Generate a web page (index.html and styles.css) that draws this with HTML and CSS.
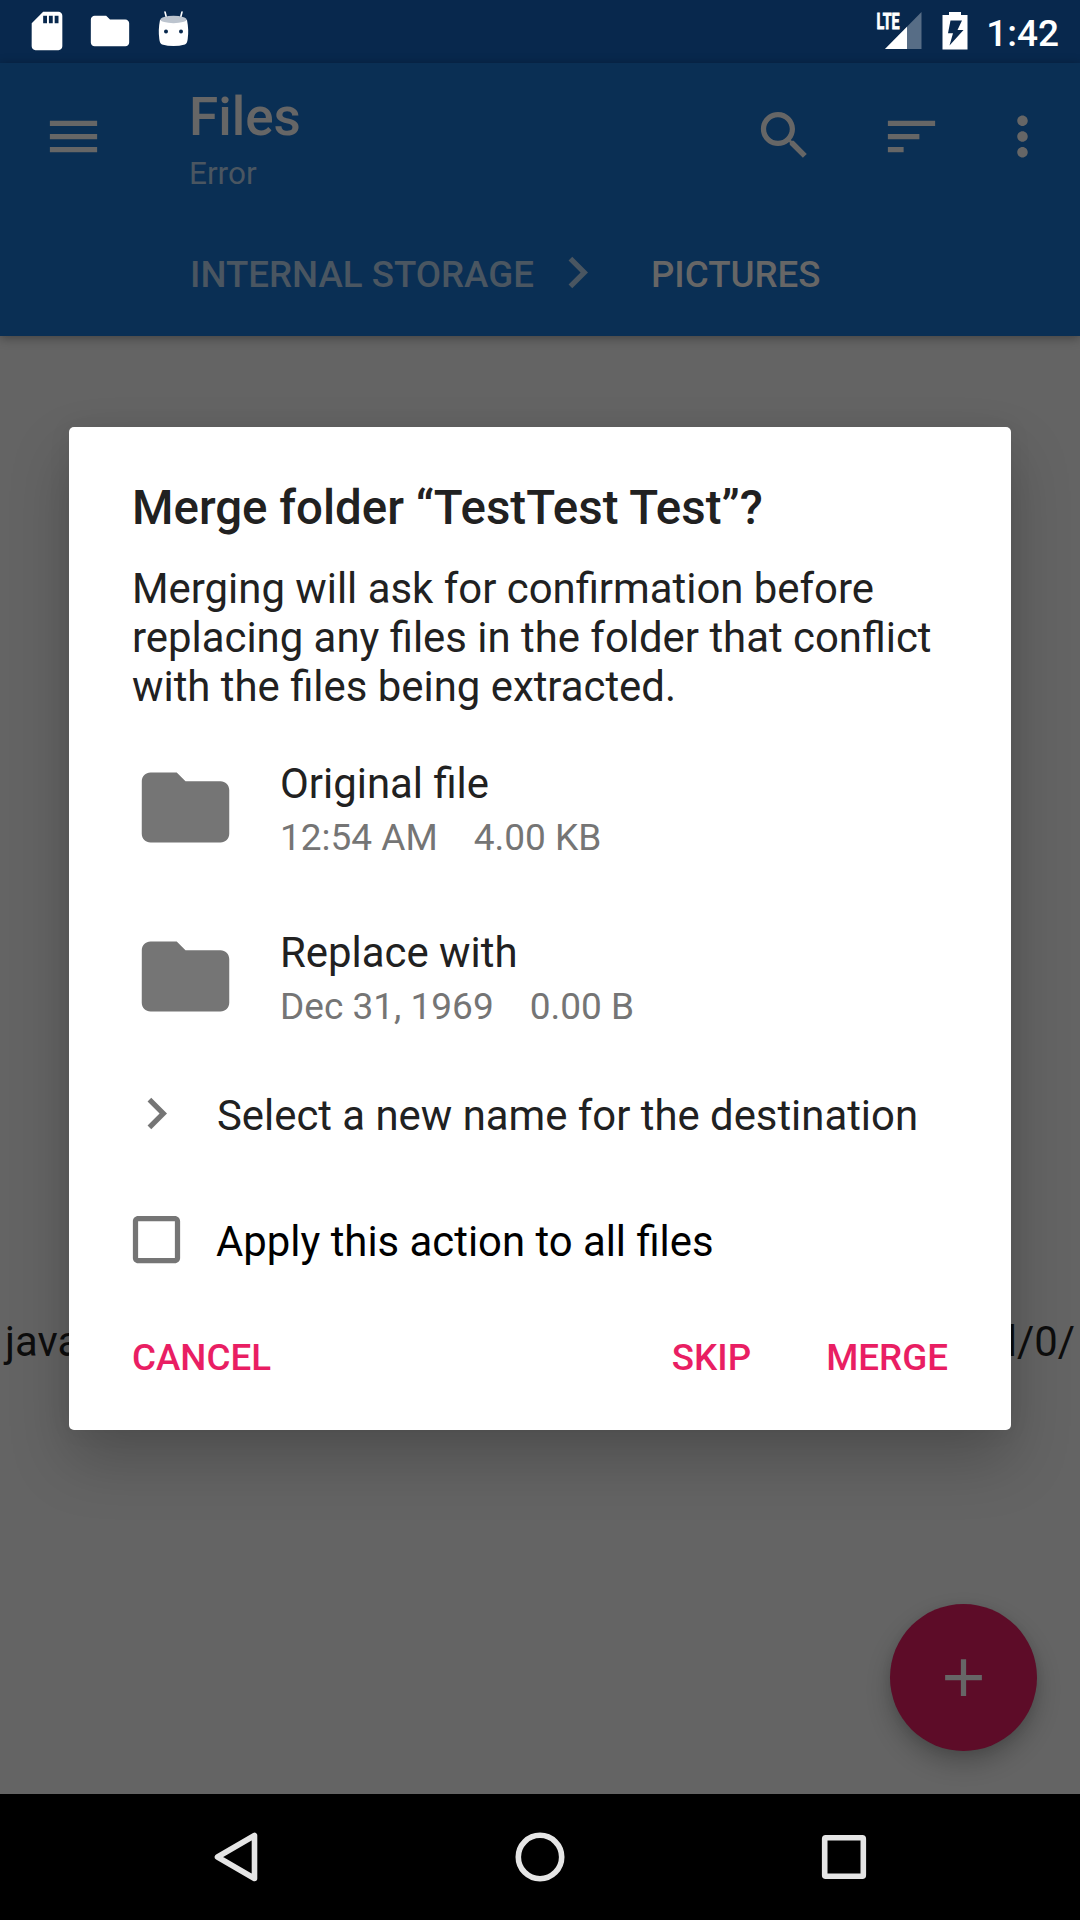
FILE: index.html
```html
<!DOCTYPE html>
<html lang="en">
<head>
<meta charset="utf-8">
<title>Files</title>
<link rel="stylesheet" href="styles.css">
</head>
<body>
<div class="screen">
  <header class="status-bar">
    <div class="notifications">
      <svg class="status-icon" viewBox="0 0 24 24"><path d="M18 2h-8L4.02 8 4 20c0 1.1.9 2 2 2h12c1.1 0 2-.9 2-2V4c0-1.1-.9-2-2-2zm-6 6h-2V4h2v4zm3 0h-2V4h2v4zm3 0h-2V4h2v4z"/></svg>
      <svg class="status-icon" viewBox="0 0 24 24"><path d="M10 4H4c-1.1 0-1.99.9-1.99 2L2 18c0 1.1.9 2 2 2h16c1.1 0 2-.9 2-2V8c0-1.1-.9-2-2-2h-8l-2-2z"/></svg>
      <svg class="status-icon" viewBox="0 0 46 46">
        <path d="M15 4l1.800 7M32 4l-1.800 7" fill="none" stroke="#fff" stroke-width="1.600" stroke-linecap="round"/>
        <path d="M10 12Q8 22 9.300 31Q9.800 35.500 12 36.500Q23.500 39.500 35 36.500Q37.200 35.500 37.700 31Q39 22 37 12Z"/>
        <ellipse class="android-top" cx="23.500" cy="11.500" rx="13.200" ry="3.700"/>
        <circle class="android-eye" cx="16" cy="23.500" r="2"/>
        <circle class="android-eye" cx="31" cy="23.500" r="2"/>
      </svg>
    </div>
    <div class="system">
      <svg class="signal" viewBox="0 0 48 51">
        <path d="M11 49L47.500 12V49Z" fill-opacity=".32"/>
        <path d="M11 49L33 26.700V49Z"/>
        <text class="lte" x="2.500" y="28.500" textLength="23" lengthAdjust="spacingAndGlyphs">LTE</text>
      </svg>
      <svg class="battery" viewBox="0 0 26 40"><path fill-rule="evenodd" d="M7 1h12v3h6.500v34.500H.500V4H7zM8.500 9.500L6 22.300h5L7.500 34.500 21.500 19h-6L20 9.500z"/></svg>
      <span class="clock">1:42</span>
    </div>
  </header>

  <section class="app-bar">
    <div class="toolbar">
      <svg class="icon" viewBox="0 0 24 24"><path d="M3 18h18v-2H3v2zm0-5h18v-2H3v2zm0-7v2h18V6H3z"/></svg>
      <div class="titles">
        <h1 class="title">Files</h1>
        <div class="subtitle">Error</div>
      </div>
      <div class="actions">
        <svg class="icon search" viewBox="0 0 24 24"><path d="M15.500 14h-.79l-.28-.27C15.410 12.590 16 11.110 16 9.500 16 5.910 13.090 3 9.500 3S3 5.910 3 9.500 5.910 16 9.500 16c1.610 0 3.090-.59 4.230-1.570l.27.28v.79l5 4.990L20.490 19l-4.990-5zm-6 0C7.010 14 5 11.990 5 9.500S7.010 5 9.500 5 14 7.010 14 9.500 11.990 14 9.500 14z"/></svg>
        <svg class="icon" viewBox="0 0 24 24"><path d="M3 18h6v-2H3v2zM3 6v2h18V6H3zm0 7h12v-2H3v2z"/></svg>
        <svg class="icon" viewBox="0 0 24 24"><path d="M12 8c1.100 0 2-.9 2-2s-.9-2-2-2-2 .9-2 2 .9 2 2 2zm0 2c-1.100 0-2 .9-2 2s.9 2 2 2 2-.9 2-2-.9-2-2-2zm0 6c-1.100 0-2 .9-2 2s.9 2 2 2 2-.9 2-2-.9-2-2-2z"/></svg>
      </div>
    </div>
    <nav class="breadcrumbs">
      <span class="crumb">INTERNAL STORAGE</span>
      <svg class="icon crumb-arrow" viewBox="0 0 24 24"><path d="M10 6L8.590 7.410 13.170 12l-4.580 4.590L10 18l6-6z"/></svg>
      <span class="crumb current">PICTURES</span>
    </nav>
  </section>

  <main class="content">
    <p class="error"><span>java</span><span>d/0/</span></p>
    <button class="fab" aria-label="Add"><svg class="icon" viewBox="0 0 24 24"><path d="M19 13h-6v6h-2v-6H5v-2h6V5h2v6h6v2z"/></svg></button>
  </main>

  <footer class="nav-bar">
    <svg class="nav-icon" viewBox="0 0 54 54"><path d="M45.500 5.500V48.500L8.500 27Z"/></svg>
    <svg class="nav-icon" viewBox="0 0 54 54"><circle cx="27" cy="27" r="21.700"/></svg>
    <svg class="nav-icon" viewBox="0 0 54 54"><rect x="7.700" y="7.700" width="38.600" height="38.600" rx="1"/></svg>
  </footer>

  <div class="dialog" role="dialog">
    <h2 class="dialog-title">Merge folder “TestTest Test”?</h2>
    <p class="message">Merging will ask for confirmation before<br>replacing any files in the folder that conflict<br>with the files being extracted.</p>
    <div class="files">
      <div class="file">
        <svg class="folder" viewBox="0 0 24 24"><path d="M10 4H4c-1.100 0-1.990.9-1.990 2L2 18c0 1.100.9 2 2 2h16c1.100 0 2-.9 2-2V8c0-1.100-.9-2-2-2h-8l-2-2z"/></svg>
        <div class="file-text">
          <div class="file-name">Original file</div>
          <div class="file-meta"><span>12:54 AM</span><span>4.00 KB</span></div>
        </div>
      </div>
      <div class="file">
        <svg class="folder" viewBox="0 0 24 24"><path d="M10 4H4c-1.100 0-1.990.9-1.990 2L2 18c0 1.100.9 2 2 2h16c1.100 0 2-.9 2-2V8c0-1.100-.9-2-2-2h-8l-2-2z"/></svg>
        <div class="file-text">
          <div class="file-name">Replace with</div>
          <div class="file-meta"><span>Dec 31, 1969</span><span>0.00 B</span></div>
        </div>
      </div>
    </div>
    <div class="option">
      <svg class="icon" viewBox="0 0 24 24"><path d="M10 6L8.590 7.410 13.170 12l-4.580 4.590L10 18l6-6z"/></svg>
      <span class="option-label">Select a new name for the destination</span>
    </div>
    <div class="option apply">
      <svg class="icon" viewBox="0 0 24 24"><path d="M19 5v14H5V5h14m0-2H5c-1.100 0-2 .9-2 2v14c0 1.100.9 2 2 2h14c1.100 0 2-.9 2-2V5c0-1.100-.9-2-2-2z"/></svg>
      <span class="option-label">Apply this action to all files</span>
    </div>
    <div class="buttons">
      <span class="button cancel">CANCEL</span>
      <span class="button">SKIP</span>
      <span class="button">MERGE</span>
    </div>
  </div>
</div>
</body>
</html>
```
FILE: styles.css
```css
* { box-sizing: border-box; }
body { margin: 0; font-family: Roboto, "Liberation Sans", sans-serif; }
h1, h2, p { margin: 0; font-weight: 400; }
svg { display: block; flex: none; }

.screen {
  position: relative;
  width: 1080px;
  height: 1920px;
  display: flex;
  flex-direction: column;
  overflow: hidden;
  background: #646464;
}

.icon { width: 63px; height: 63px; fill: currentColor; }

/* Status bar */
.status-bar {
  height: 63px;
  flex: none;
  display: flex;
  justify-content: space-between;
  padding: 0 21px 0 24px;
  background: #08284d;
  color: #fff;
  fill: #fff;
}
.notifications { display: flex; gap: 17px; padding: 8px 0 0 .4px; }
.status-icon { width: 46px; height: 46px; }
.android-top { fill: #bcc4ce; }
.android-eye { fill: #08284d; }
.system { display: flex; align-items: flex-start; }
.signal { width: 48px; height: 51px; margin-right: 20px; }
.lte { font: 700 22px Roboto, sans-serif; stroke: #fff; stroke-width: .8px; }
.battery { width: 26px; height: 40px; margin: 11px 18px 0 0; }
.clock { font-size: 37px; font-weight: 500; line-height: 43px; padding-top: 12px; }

/* App bar */
.app-bar {
  position: relative;
  z-index: 1;
  height: 273px;
  flex: none;
  background: #0a2f54;
  color: #666;
  box-shadow: 0 2px 10px rgba(0, 0, 0, .35);
}
.toolbar {
  height: 147px;
  display: flex;
  align-items: center;
  padding: 0 26px 0 42px;
}
.titles { padding: 4px 0 0 84px; }
.title { font-size: 53px; font-weight: 500; line-height: 62px; }
.subtitle { margin-top: 7px; font-size: 31.5px; line-height: 37px; color: #4a5661; }
.actions { display: flex; margin-left: auto; gap: 64px; }
.actions .icon:last-child { margin-left: -16px; }
.search { margin-top: -1px; }
.breadcrumbs {
  height: 126px;
  display: flex;
  align-items: center;
  padding: 3px 0 0 190px;
}
.crumb { font-size: 36.7px; font-weight: 500; line-height: 43px; color: #4a5661; }
.crumb-arrow { margin: -4px 42px 0 12px; color: #4a5661; }
.crumb.current { color: #666; }

/* Content */
.content { position: relative; flex: 1; padding-top: 981px; }
.error {
  display: flex;
  justify-content: space-between;
  padding: 0 5px;
  font-size: 41.85px;
  line-height: 49px;
  color: #0d0d0d;
}
.fab {
  position: absolute;
  right: 43px;
  bottom: 43px;
  width: 147px;
  height: 147px;
  padding: 0;
  display: grid;
  place-items: center;
  border: 0;
  border-radius: 50%;
  background: #5d0c28;
  color: #666;
  box-shadow: 0 12px 24px rgba(0, 0, 0, .24), 0 2px 10px rgba(0, 0, 0, .08);
}

/* Navigation bar */
.nav-bar {
  height: 126px;
  flex: none;
  display: flex;
  justify-content: space-between;
  align-items: center;
  padding: 0 209px;
  background: #000;
}
.nav-icon { width: 54px; height: 54px; fill: none; stroke: #e5e5e5; stroke-width: 5.6; stroke-linejoin: round; }

/* Dialog */
.dialog {
  position: absolute;
  z-index: 2;
  left: 69px;
  top: 427px;
  width: 942px;
  height: 1003px;
  padding: 54px 63px 0;
  border-radius: 5px;
  background: #fff;
  color: #212121;
  box-shadow: 0 30px 60px rgba(0, 0, 0, .21), 0 0 24px rgba(0, 0, 0, .06);
}
.dialog-title { font-size: 47.45px; font-weight: 500; line-height: 55px; }
.message { margin-top: 28px; font-size: 41.88px; line-height: 49px; white-space: nowrap; }
.files { display: flex; flex-direction: column; gap: 64px; margin: 44px 0 0 1px; }
.file { display: flex; gap: 42px; height: 105px; }
.folder { width: 105px; height: 105px; fill: #757575; }
.file-text { padding-top: 4px; }
.file-name { font-size: 41.9px; line-height: 49px; }
.file-meta { display: flex; gap: 36px; margin-top: 8px; font-size: 37px; line-height: 43px; color: #757575; }
.option { display: flex; gap: 29px; height: 63px; margin: 53px 0 0 -7px; font-size: 41.85px; line-height: 49px; }
.option .icon { color: #757575; }
.option-label { padding-top: 9px; white-space: nowrap; }
.option.apply { gap: 28px; margin-top: 63px; color: #000; }
.buttons { display: flex; gap: 75px; margin-top: 65px; }
.button { font-size: 36.75px; font-weight: 500; line-height: 43px; color: #e91e63; }
.cancel { margin-right: auto; }
```
